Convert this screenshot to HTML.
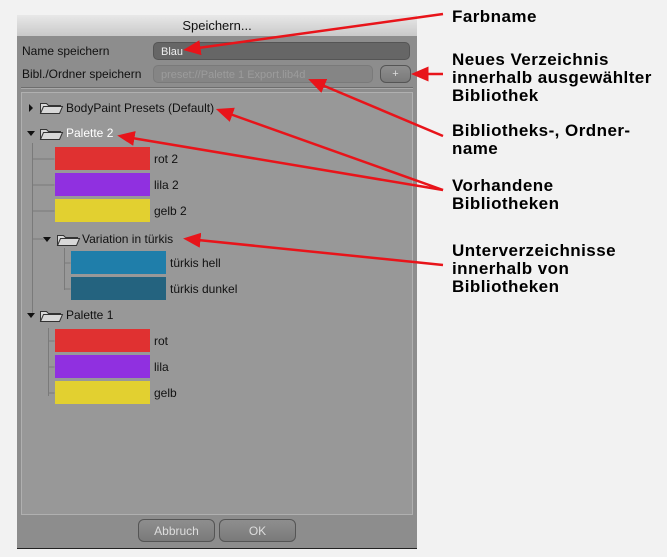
<!DOCTYPE html><html><head><meta charset="utf-8"><style>
body{margin:0;width:667px;height:557px;background:#f2f2f2;font-family:"Liberation Sans","DejaVu Sans",sans-serif;position:relative;overflow:hidden}
.a{position:absolute}
#dlg{left:17px;top:15px;width:400px;height:533px;background:#8d8d8d;box-shadow:0 1px 0 #222}
#title{left:17px;top:15px;width:400px;height:21px;background:linear-gradient(#e8e8e8,#c9c9c9);text-align:center;font-size:13px;line-height:21px;color:#111}
.lbl{font-size:12px;color:#111}
.fld{border-radius:5px;height:18px;font-size:11px;line-height:18px;padding-left:7px;box-sizing:border-box}
#panel{left:21px;top:92px;width:392px;height:423px;background:#989898;border:1px solid #b0b0b0;box-sizing:border-box}
.t{font-size:12px;color:#111}
.sw{position:absolute;width:95px;height:23px}
.btn{border:1px solid #555;border-radius:6px;background:linear-gradient(#8e8e8e,#7a7a7a);color:#ddd;font-size:12px;text-align:center;line-height:22px;height:23px;box-sizing:border-box}
.ann{left:452px;font-size:17px;font-weight:bold;line-height:18px;color:#000;letter-spacing:0.45px}
</style></head><body>
<div id="dlg" class="a"></div>
<div id="title" class="a">Speichern...</div>
<div class="a lbl" style="left:22px;top:44px">Name speichern</div>
<div class="a fld" style="left:153px;top:42px;width:257px;background:#666;color:#eee;border:1px solid #555">Blau</div>
<div class="a lbl" style="left:22px;top:67px">Bibl./Ordner speichern</div>
<div class="a fld" style="left:153px;top:65px;width:220px;background:#858585;color:#9c9c9c;border:1px solid #7a7a7a">preset://Palette 1 Export.lib4d</div>
<div class="a btn" style="left:380px;top:65px;width:31px;height:18px;line-height:17px;font-size:11px">+</div>
<div class="a" style="left:21px;top:87px;width:392px;height:1px;background:#6e6e6e;border-bottom:1px solid #a8a8a8"></div>
<div id="panel" class="a"></div>
<svg class="a" style="left:0;top:0" width="667" height="557">
<g stroke="#7a7a7a" fill="none" stroke-width="1">
<path d="M32.5 143v172M32.5 159h22M32.5 185h22M32.5 211h22M32.5 239h12M48.5 328v68M48.5 341h6M48.5 367h6M48.5 393h6M64.5 248v42M64.5 263h6M64.5 289h6"/>
</g>
<g fill="#111"><path d="M29 104l4 4-4 4z"/><path d="M27 131l8 0-4 5z"/><path d="M43 237l8 0-4 5z"/><path d="M27 313l8 0-4 5z"/></g>
<g fill="#d8d8d8" stroke="#333" stroke-width="1">
<path d="M40.5 113.5v-10h6l2 2h12v2"/><path d="M40.5 113.5l3-7h19l-3 7z"/>
<path d="M40.5 139.5v-10h6l2 2h12v2"/><path d="M40.5 139.5l3-7h19l-3 7z"/>
<path d="M57.5 245.5v-10h6l2 2h12v2"/><path d="M57.5 245.5l3-7h19l-3 7z"/>
<path d="M40.5 321.5v-10h6l2 2h12v2"/><path d="M40.5 321.5l3-7h19l-3 7z"/>
</g>
</svg>
<div class="a t" style="left:66px;top:101px">BodyPaint Presets (Default)</div>
<div class="a t" style="left:66px;top:126px;color:#fff">Palette 2</div>
<div class="sw" style="left:55px;top:147px;background:#e03131"></div><div class="a t" style="left:154px;top:152px">rot 2</div>
<div class="sw" style="left:55px;top:173px;background:#9030e0"></div><div class="a t" style="left:154px;top:178px">lila 2</div>
<div class="sw" style="left:55px;top:199px;background:#e2d030"></div><div class="a t" style="left:154px;top:204px">gelb 2</div>
<div class="a t" style="left:82px;top:232px">Variation in türkis</div>
<div class="sw" style="left:71px;top:251px;background:#1f7eaa"></div><div class="a t" style="left:170px;top:256px">türkis hell</div>
<div class="sw" style="left:71px;top:277px;background:#24637f"></div><div class="a t" style="left:170px;top:282px">türkis dunkel</div>
<div class="a t" style="left:66px;top:308px">Palette 1</div>
<div class="sw" style="left:55px;top:329px;background:#e03131"></div><div class="a t" style="left:154px;top:334px">rot</div>
<div class="sw" style="left:55px;top:355px;background:#9030e0"></div><div class="a t" style="left:154px;top:360px">lila</div>
<div class="sw" style="left:55px;top:381px;background:#e2d030"></div><div class="a t" style="left:154px;top:386px">gelb</div>
<div class="a btn" style="left:138px;top:519px;width:77px">Abbruch</div>
<div class="a btn" style="left:219px;top:519px;width:77px">OK</div>
<div class="a ann" style="top:8px">Farbname</div>
<div class="a ann" style="top:51px">Neues Verzeichnis<br>innerhalb ausgewählter<br>Bibliothek</div>
<div class="a ann" style="top:122px">Bibliotheks-, Ordner-<br>name</div>
<div class="a ann" style="top:177px">Vorhandene<br>Bibliotheken</div>
<div class="a ann" style="top:242px">Unterverzeichnisse<br>innerhalb von<br>Bibliotheken</div>
<svg class="a" style="left:0;top:0" width="667" height="557">
<defs><marker id="m" markerWidth="7" markerHeight="6" refX="1" refY="3" orient="auto" markerUnits="strokeWidth"><path d="M0 0L7 3L0 6z" fill="#e8141a"/></marker></defs>
<g stroke="#e8141a" stroke-width="2.5" fill="none" marker-end="url(#m)">
<line x1="443" y1="14" x2="198" y2="48"/>
<line x1="443" y1="74" x2="426" y2="74"/>
<line x1="443" y1="136" x2="322" y2="85"/>
<line x1="443" y1="190" x2="230" y2="114"/>
<line x1="443" y1="190" x2="132" y2="138"/>
<line x1="443" y1="265" x2="198" y2="240"/>
</g>
</svg>
</body></html>
